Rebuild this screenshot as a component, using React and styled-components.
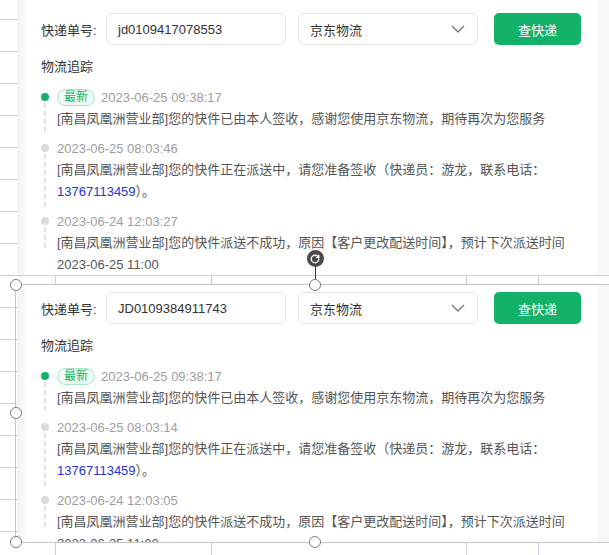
import styled, { createGlobalStyle } from "styled-components";
import { RotateCw } from "lucide-react";

const GlobalStyle = createGlobalStyle`
  html, body {
    margin: 0;
    padding: 0;
    background: #fff;
    overflow: hidden;
  }
  * { box-sizing: border-box; }
`;

const cards = [
  {
    no: "jd0109417078553",
    times: ["2023-06-25 09:38:17", "2023-06-25 08:03:46", "2023-06-24 12:03:27"],
    height: 278,
    padTop: 16,
    offset: -3,
  },
  {
    no: "JD0109384911743",
    times: ["2023-06-25 09:38:17", "2023-06-25 08:03:14", "2023-06-24 12:03:05"],
    height: 258,
    padTop: 7,
    offset: 0,
    selected: true,
  },
];

function Chevron() {
  return (
    <svg width="14" height="8" viewBox="0 0 14 8" fill="none">
      <path d="M1 1 L7 7 L13 1" stroke="#777" strokeWidth="1.3" />
    </svg>
  );
}

function Step({ active, last, children, time }) {
  return (
    <Item>
      <Rail>
        <Dot $active={active} />
        <Tail $last={last} />
      </Rail>
      <div>
        <Header>
          {active && <Badge>最新</Badge>}
          <Time>{time}</Time>
        </Header>
        <Content>{children}</Content>
      </div>
    </Item>
  );
}

function Track({ data }) {
  const { no, times, height, padTop, offset, selected } = data;
  return (
    <Block $offset={offset}>
      <Card $h={height} $pt={padTop}>
        <SearchRow>
          <Label>快递单号:</Label>
          <Input>{no}</Input>
          <Select>
            <span>京东物流</span>
            <Chevron />
          </Select>
          <Button>查快递</Button>
        </SearchRow>
        <Title>物流追踪</Title>
        <Timeline>
          <Step active time={times[0]}>
            [南昌凤凰洲营业部]您的快件已由本人签收，感谢您使用京东物流，期待再次为您服务
          </Step>
          <Step time={times[1]}>
            [南昌凤凰洲营业部]您的快件正在派送中，请您准备签收（快递员：游龙，联系电话：
            <Phone>13767113459</Phone>）。
          </Step>
          <Step last time={times[2]}>
            [南昌凤凰洲营业部]您的快件派送不成功，原因【客户更改配送时间】，预计下次派送时间2023-06-25 11:00
          </Step>
        </Timeline>
      </Card>
      {selected && (
        <Selection>
          <Handle $x="0%" $y="0%" />
          <Handle $x="50%" $y="0%" />
          <Handle $x="0%" $y="50%" />
          <Handle $x="0%" $y="100%" />
          <Handle $x="50%" $y="100%" />
          <Stem />
          <Rotate>
            <RotateCw size={10} color="#fff" strokeWidth={3.2} />
          </Rotate>
        </Selection>
      )}
    </Block>
  );
}

export default function App() {
  return (
    <>
      <GlobalStyle />
      <Canvas>
        {cards.map((c) => (
          <Track key={c.no} data={c} />
        ))}
      </Canvas>
    </>
  );
}

const Canvas = styled.div`
  position: relative;
  width: 609px;
  height: 555px;
  overflow: hidden;
  display: flex;
  flex-direction: column;
  gap: 10px;
  padding-left: 17px;
  font-family: "Liberation Sans", "Noto Sans CJK SC", sans-serif;
  font-size: 13px;
  background-color: #fff;
  background-image:
    linear-gradient(to right,
      transparent 55px, #c9cde2 55px, #c9cde2 56px, transparent 56px,
      transparent 211px, #c9cde2 211px, #c9cde2 212px, transparent 212px,
      transparent 466px, #c9cde2 466px, #c9cde2 467px, transparent 467px,
      transparent 538px, #c9cde2 538px, #c9cde2 539px, transparent 539px),
    repeating-linear-gradient(to bottom,
      transparent 0, transparent 19px, #c9cde2 19px, #c9cde2 20px, transparent 20px, transparent 32px);
`;

const Block = styled.div`
  position: relative;
  flex: none;
  margin-top: ${(p) => p.$offset}px;
  padding: 0 12px 0 8px;
  background: linear-gradient(to right, #f2f2f3, #f8f8f8 8px, #f8f8f8);
`;

const Card = styled.div`
  height: ${(p) => p.$h}px;
  overflow: hidden;
  background: #fff;
  padding: ${(p) => p.$pt}px 16px 0;
`;

const SearchRow = styled.div`
  display: flex;
  align-items: center;
  height: 32px;
`;

const Label = styled.div`
  width: 65px;
  color: #333;
`;

const Field = styled.div`
  width: 180px;
  height: 32px;
  border: 1px solid #e4e4e4;
  border-radius: 6px;
  display: flex;
  align-items: center;
  padding: 0 12px 0 11px;
  color: #333;
`;

const Input = styled(Field)``;

const Select = styled(Field)`
  margin-left: 12px;
  justify-content: space-between;
`;

const Button = styled.div`
  margin-left: 16px;
  width: 87px;
  height: 32px;
  border-radius: 5px;
  background: #12b26a;
  color: #fff;
  display: flex;
  align-items: center;
  justify-content: center;
`;

const Title = styled.div`
  margin-top: 11px;
  line-height: 22px;
  color: #333;
`;

const Timeline = styled.div`
  margin-top: 8px;
  display: flex;
  flex-direction: column;
`;

const Item = styled.div`
  display: grid;
  grid-template-columns: 8px 1fr;
  column-gap: 8px;
  padding-bottom: 7px;
`;

const Rail = styled.div`
  display: flex;
  flex-direction: column;
  align-items: center;
  gap: 2px;
  padding-top: 7px;
  margin-bottom: -5px;
`;

const Dot = styled.span`
  flex: none;
  width: 8px;
  height: 8px;
  border-radius: 50%;
  background: ${(p) => (p.$active ? "#12b26a" : "#dadada")};
`;

const Tail = styled.span`
  width: 2px;
  ${(p) => (p.$last ? "height: 24px;" : "flex: 1;")}
  background: repeating-linear-gradient(to bottom, #e2e2e2 0, #e2e2e2 5px, transparent 5px, transparent 8px);
`;

const Header = styled.div`
  display: flex;
  align-items: center;
  gap: 6px;
  height: 22px;
`;

const Badge = styled.span`
  height: 17px;
  padding: 0 6px;
  border: 1px solid #a9e2c6;
  border-radius: 9px;
  background: #effaf4;
  color: #12b26a;
  font-size: 12px;
  line-height: 15px;
`;

const Time = styled.span`
  color: #9d9d9d;
`;

const Content = styled.div`
  line-height: 22px;
  color: #555;
`;

const Phone = styled.span`
  color: #2433d6;
`;

const Selection = styled.div`
  position: absolute;
  left: -2px;
  top: -1px;
  width: 600px;
  bottom: 0;
  border-top: 1px solid #c4c4c8;
  border-left: 1px solid #c4c4c8;
  border-bottom: 1px solid #c4c4c8;
  pointer-events: none;
`;

const Handle = styled.span`
  position: absolute;
  left: ${(p) => p.$x};
  top: ${(p) => p.$y};
  width: 12px;
  height: 12px;
  margin: -6.5px 0 0 -6.5px;
  border-radius: 50%;
  border: 1.5px solid #7a7a7a;
  background: #fff;
`;

const Stem = styled.span`
  position: absolute;
  left: 50%;
  top: -19px;
  width: 1.5px;
  height: 13px;
  margin-left: -1px;
  background: #333;
`;

const Rotate = styled.span`
  position: absolute;
  left: 50%;
  top: -35px;
  width: 17px;
  height: 17px;
  margin-left: -9px;
  border-radius: 50%;
  background: #4a4a4a;
  display: flex;
  align-items: center;
  justify-content: center;
`;
